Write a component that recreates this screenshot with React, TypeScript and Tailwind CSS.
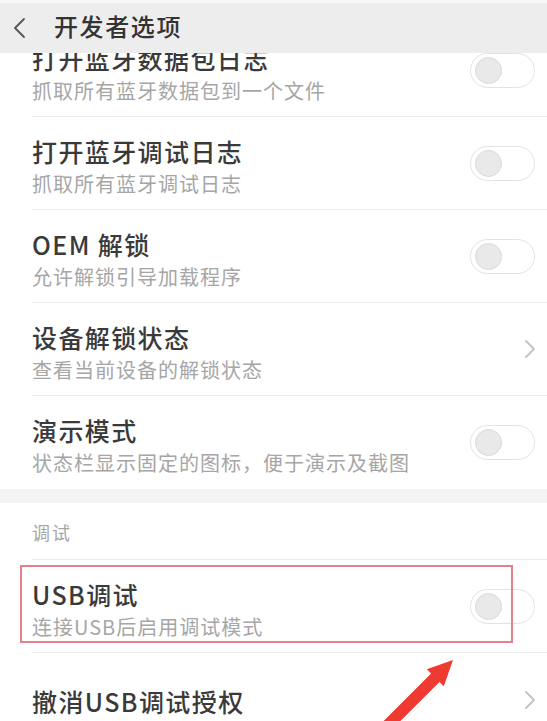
import React from "react";

const font = { fontFamily: '"Noto Sans CJK SC", "Noto Sans", sans-serif' };

function Toggle() {
  return (
    <div className="w-[65px] h-[35px] rounded-full border-[1.5px] border-[#e3e3e3] bg-white flex items-center pl-[3.5px] shrink-0">
      <div className="w-[27px] h-[27px] rounded-full bg-[#e9e9e9] border border-[#d9d9d9]" />
    </div>
  );
}

function Chevron() {
  return (
    <svg width="14" height="22" viewBox="0 0 14 22" className="shrink-0 mr-[-2px]">
      <polyline points="3,3 11,11 3,19" fill="none" stroke="#c2c2c2" strokeWidth="1.8" strokeLinecap="round" strokeLinejoin="round" />
    </svg>
  );
}

type RowProps = {
  title: string;
  sub?: string;
  right: "toggle" | "chevron";
  last?: boolean;
};

function Row({ title, sub, right, last }: RowProps) {
  return (
    <div className="pl-[32px]">
      <div className={`h-[93px] flex items-center pr-[12px] ${last ? "" : "border-b border-[#ececec]"}`}>
        <div className={`flex-1 flex flex-col ${sub ? "self-start pt-[19px]" : "pt-[3px]"}`}>
          <div className="text-[25px] leading-[30px] tracking-[1.4px] font-medium text-[#3a3a3a]">{title}</div>
          {sub && <div className="mt-[5px] text-[20px] leading-[26px] tracking-[1px] text-[#a6a6a6]">{sub}</div>}
        </div>
        {right === "toggle" ? <Toggle /> : <Chevron />}
      </div>
    </div>
  );
}

export default function App() {
  return (
    <div className="relative w-full h-[721px] overflow-hidden bg-white" style={font}>
      {/* title bar sits over the scrolled list */}
      <div className="absolute top-0 left-0 right-0 z-10 h-[53px] bg-[#ededed] border-t-[3px] border-[#f7f7f7] flex items-center">
        <svg width="16" height="22" viewBox="0 0 16 22" className="ml-[11px]">
          <polyline points="13,2 4,11 13,20" fill="none" stroke="#555" strokeWidth="1.8" strokeLinecap="round" strokeLinejoin="round" />
        </svg>
        <div className="ml-[27px] text-[24px] leading-[30px] tracking-[1.6px] font-medium text-[#333] mt-[-4px]">开发者选项</div>
      </div>

      <div className="pt-[24px]">
        <Row title="打开蓝牙数据包日志" sub="抓取所有蓝牙数据包到一个文件" right="toggle" />
        <Row title="打开蓝牙调试日志" sub="抓取所有蓝牙调试日志" right="toggle" />
        <Row title="OEM 解锁" sub="允许解锁引导加载程序" right="toggle" />
        <Row title="设备解锁状态" sub="查看当前设备的解锁状态" right="chevron" />
        <Row title="演示模式" sub="状态栏显示固定的图标，便于演示及截图" right="toggle" last />

        <div className="h-[14px] bg-[#f4f4f4]" />

        <div className="pl-[32px]">
          <div className="h-[57px] border-b border-[#ececec] pt-[16px] text-[18px] leading-[26px] tracking-[2px] text-[#a6a6a6]">调试</div>
        </div>
        <Row title="USB调试" sub="连接USB后启用调试模式" right="toggle" />
        <Row title="撤消USB调试授权" right="chevron" last />
      </div>

      {/* annotation */}
      <div className="absolute left-[20px] top-[565px] w-[493px] h-[78px] border-2 border-[#e4808a]" />
      <svg className="absolute left-0 top-0 pointer-events-none" width="547" height="721" viewBox="0 0 547 721">
        <polygon
          points="453,660 426.8,669.2 431.1,673.5 374.5,730.1 382.9,738.5 439.5,681.9 443.8,686.2"
          fill="#ef3a32"
        />
      </svg>
    </div>
  );
}
